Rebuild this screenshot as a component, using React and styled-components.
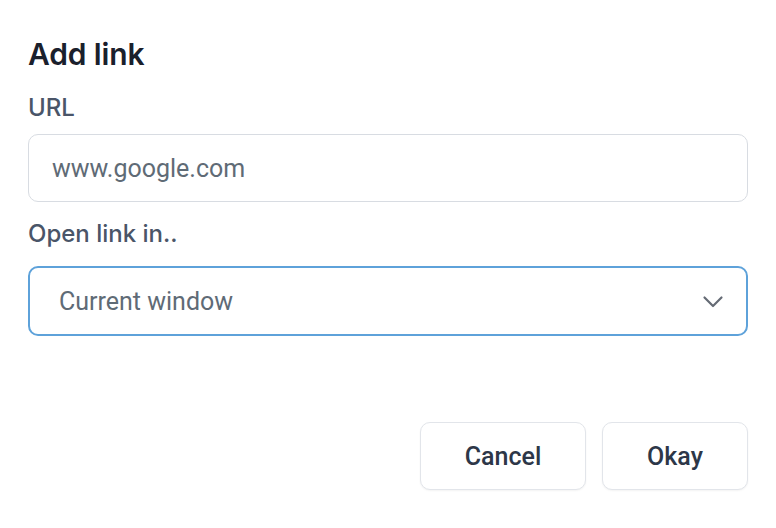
import React from 'react'
import styled, { createGlobalStyle } from 'styled-components'

const GlobalStyle = createGlobalStyle`
  body {
    margin: 0;
    background: #fff;
    font-family: Roboto, "Liberation Sans", sans-serif;
  }
`

const Dialog = styled.div`
  width: 776px;
  height: 528px;
  box-sizing: border-box;
  padding: 36px 28px 0 28px;
  display: flex;
  flex-direction: column;
`

const Title = styled.h2`
  margin: 0;
  font-family: Inter, "Noto Sans", sans-serif;
  font-size: 30px;
  font-weight: 600;
  line-height: 36px;
  color: #1a202c;
  letter-spacing: -0.15px;
`

const Label = styled.label`
  display: block;
  margin-top: ${p => p.$top || 0}px;
  font-family: Inter, "Noto Sans", sans-serif;
  font-size: 24px;
  font-weight: 500;
  line-height: 28px;
  color: #4a5568;
`

const Field = styled.div`
  margin-top: ${p => (p.$focus ? 18 : 12)}px;
  height: ${p => (p.$focus ? 70 : 68)}px;
  box-sizing: border-box;
  border: ${p => (p.$focus ? '2px solid #5ea2da' : '1px solid #d8dce2')};
  border-radius: 10px;
  display: flex;
  align-items: center;
  padding: ${p => (p.$focus ? '0 21px 0 29px' : '0 23px')};
  font-size: 25px;
  color: #5f6b76;
`

const FieldText = styled.span`
  flex: 1;
`

const Footer = styled.div`
  margin-top: 86px;
  display: flex;
  justify-content: flex-end;
  gap: 16px;
`

const Button = styled.button`
  width: ${p => p.$w}px;
  height: 68px;
  border: 1px solid #e2e5ea;
  border-radius: 10px;
  background: #fff;
  box-shadow: 0 1px 2px rgba(0, 0, 0, 0.05);
  font-family: Roboto, "Liberation Sans", sans-serif;
  font-size: 25px;
  font-weight: 500;
  color: #2d3748;
  cursor: pointer;
`

const Chevron = () => (
  <svg width="24" height="24" viewBox="0 0 24 24" fill="none">
    <path d="M3.5 8.5l8.5 8.5 8.5-8.5" stroke="#656b75" strokeWidth="2.2" strokeLinecap="round" strokeLinejoin="round" />
  </svg>
)

export default function App() {
  return (
    <>
      <GlobalStyle />
      <Dialog>
        <Title>Add link</Title>
        <Label $top={22}>URL</Label>
        <Field>
          <FieldText>www.google.com</FieldText>
        </Field>
        <Label $top={18}>Open link in..</Label>
        <Field $focus>
          <FieldText>Current window</FieldText>
          <Chevron />
        </Field>
        <Footer>
          <Button $w={166}>Cancel</Button>
          <Button $w={146}>Okay</Button>
        </Footer>
      </Dialog>
    </>
  )
}
